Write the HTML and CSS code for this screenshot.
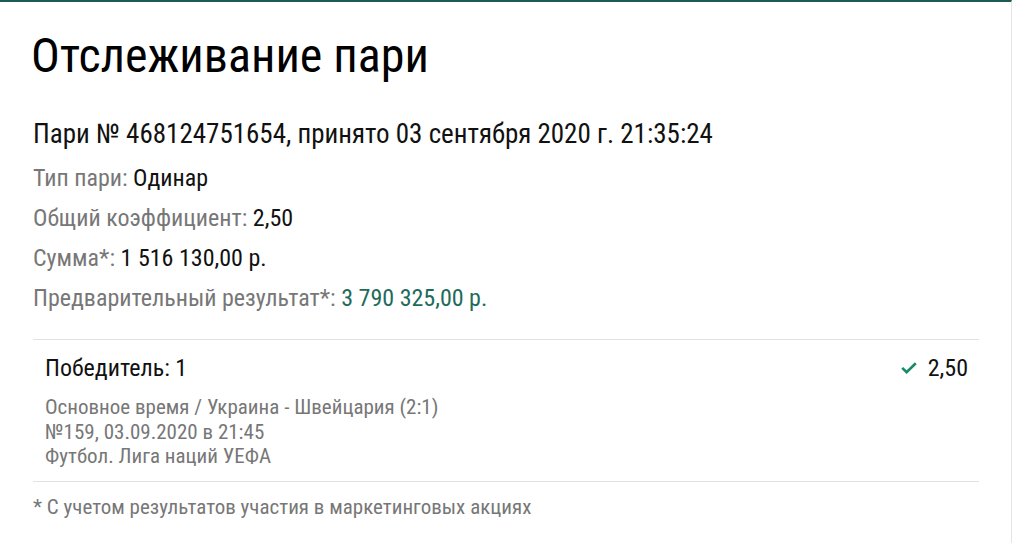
FILE: index.html
```html
<!DOCTYPE html>
<html lang="ru">
<head>
    <meta charset="UTF-8">
    <title>Отслеживание пари</title>
    <link rel="stylesheet" href="styles.css">
</head>
<body>
    <div id="page">
        <h1 class="title">Отслеживание пари</h1>
        <div class="bet-head">Пари № 468124751654, принято 03 сентября 2020 г. 21:35:24</div>
        <div class="info-row"><span class="label">Тип пари:</span> Одинар</div>
        <div class="info-row"><span class="label">Общий коэффициент:</span> 2,50</div>
        <div class="info-row"><span class="label">Сумма*:</span> 1 516 130,00 р.</div>
        <div class="info-row"><span class="label">Предварительный результат*:</span> <span class="win">3 790 325,00 р.</span></div>

        <div class="event">
            <div class="event-top">
                <div class="event-name">Победитель: 1</div>
                <div class="event-odd">
                    <svg width="16" height="12" viewBox="0 0 16 12"><path d="M1.2 5.8 L5.6 10.2 L14.8 1.2" fill="none" stroke="#178a68" stroke-width="2.6"/></svg>
                    2,50
                </div>
            </div>
            <div class="event-info">
                Основное время / Украина - Швейцария (2:1)<br>
                №159, 03.09.2020 в 21:45<br>
                Футбол. Лига наций УЕФА
            </div>
        </div>

        <p class="note">* С учетом результатов участия в маркетинговых акциях</p>
    </div>
</body>
</html>
```

FILE: styles.css
```css
body {
    margin: 0;
    padding: 0;
    background-color: #fff;
    font-family: "Roboto Condensed", Roboto, sans-serif;
    color: #111;
}

#page {
    border-top: 2px solid #1d5b52;
    border-right: 1px solid #e4e4e4;
    height: 543px;
    margin-right: 1px;
    padding: 0 32px 0 33px;
    box-sizing: border-box;
}

.title {
    font-family: "Roboto Condensed", "Liberation Sans", sans-serif;
    font-weight: normal;
    font-size: 48px;
    margin: 0 0 0 -2px;
    padding-top: 26px;
    line-height: 56px;
    color: #000;
}

.bet-head {
    font-size: 27px;
    margin-top: 33px;
    line-height: 34px;
}

.info-row {
    font-size: 24px;
    line-height: 40px;
}

.bet-head + .info-row {
    margin-top: 7px;
}

.label {
    color: #777;
}

.win {
    color: #1e6b5c;
}

.event {
    margin-top: 21px;
    border-top: 1px solid #e2e2e2;
    border-bottom: 1px solid #e2e2e2;
    padding: 13px 11px 12px 12px;
}

.event-top {
    display: flex;
    justify-content: space-between;
    align-items: center;
    font-size: 24px;
    line-height: 30px;
}

.event-odd {
    display: flex;
    align-items: center;
}

.event-odd svg {
    margin-right: 11px;
}

.event-info {
    margin-top: 12px;
    font-size: 21px;
    line-height: 24.5px;
    color: #777;
}

.note {
    margin: 13px 0 0;
    font-size: 21px;
    line-height: 24px;
    color: #777;
}
```
